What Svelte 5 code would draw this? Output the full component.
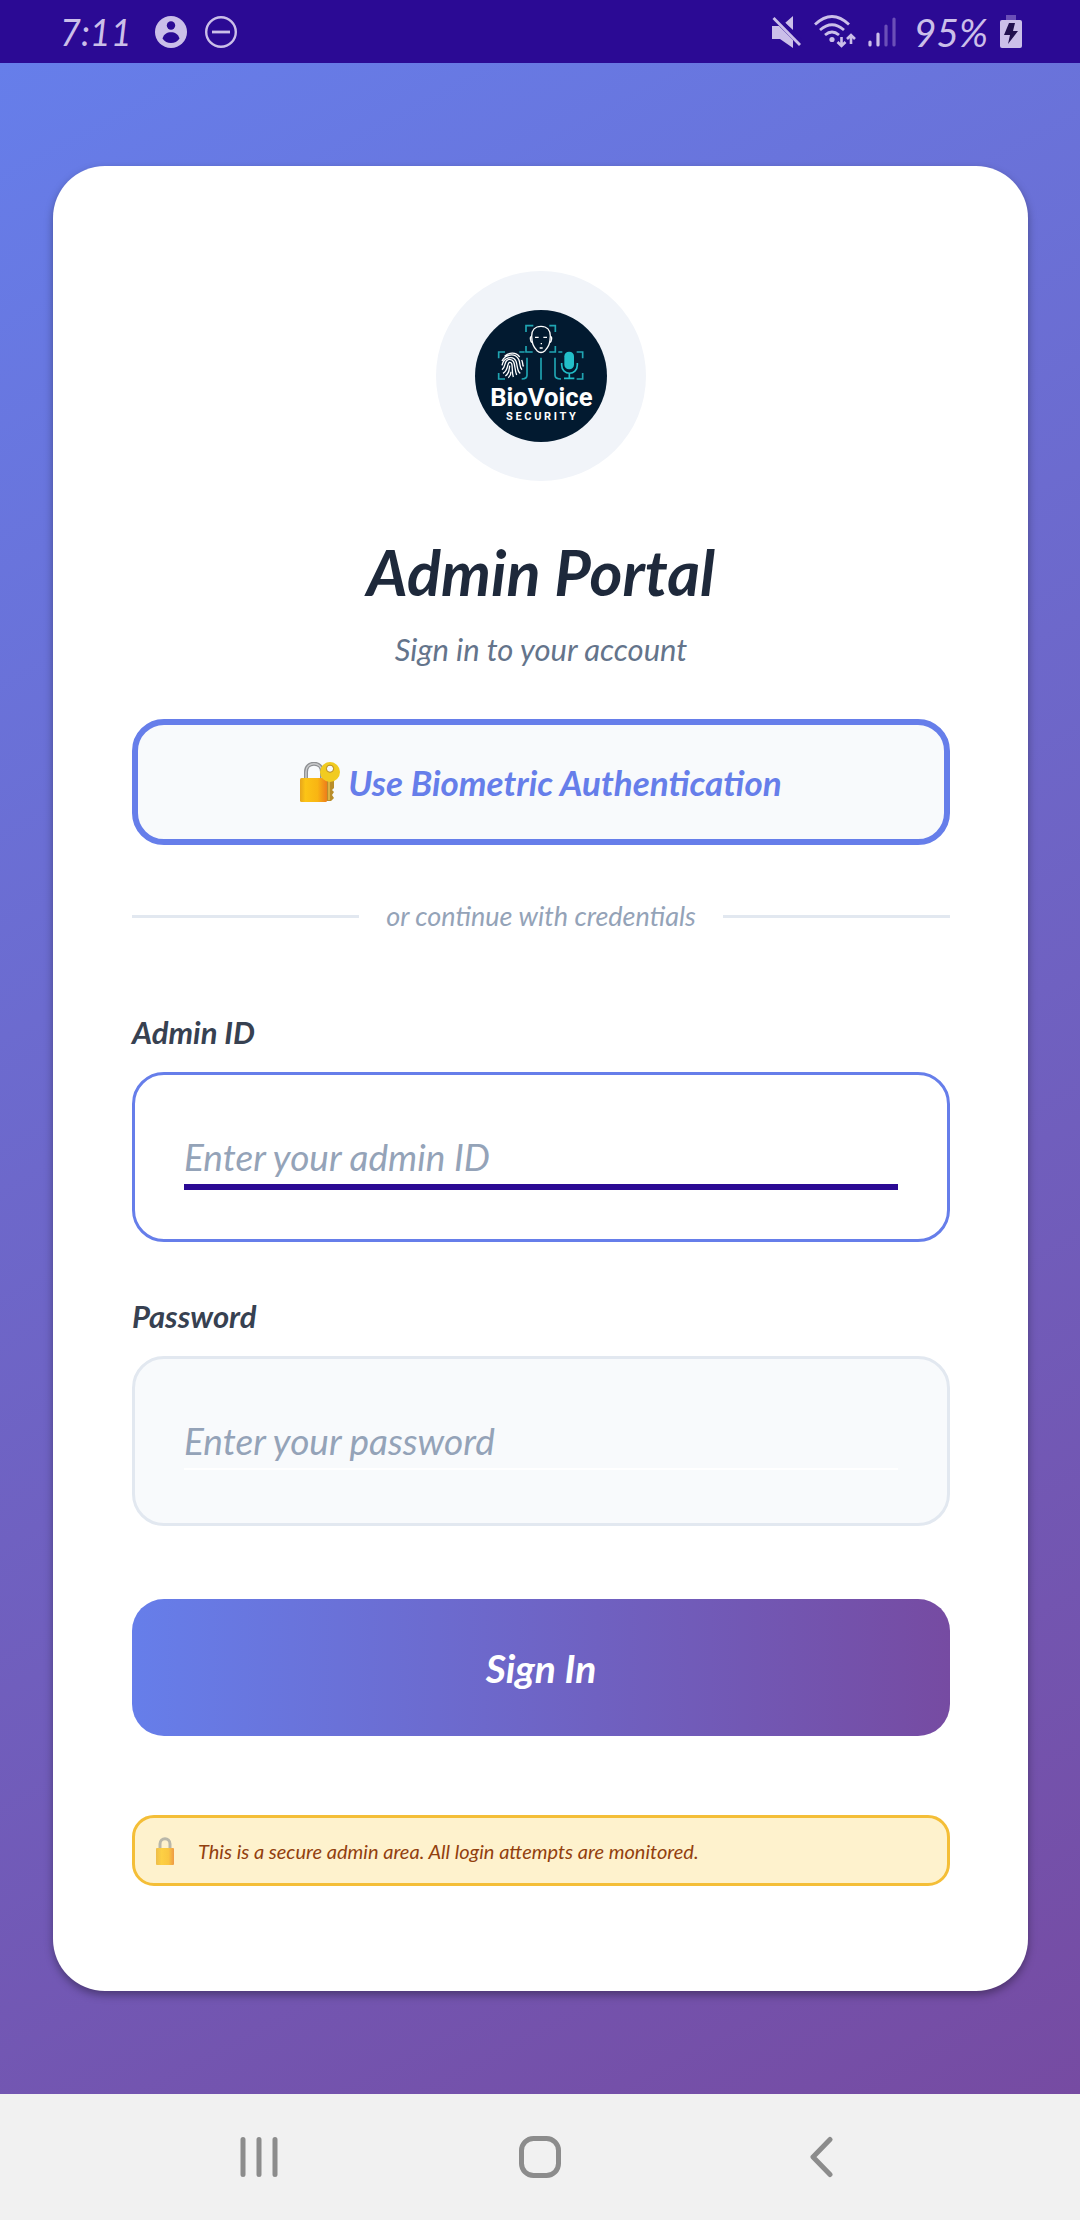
<script>
  let adminId = $state('');
  let password = $state('');
</script>

<div class="screen">
  <header class="status">
    <div class="status-left">
      <span class="clock">7:11</span>
      <svg class="round" viewBox="0 0 32 32" aria-hidden="true">
        <circle cx="16" cy="16" r="16" fill="#cbbfe9" />
        <circle cx="16" cy="9.500" r="4.200" fill="#2b0a94" />
        <path d="M7.500 22.500C9 18 12 16.300 16 16.300S23 18 24.500 22.500C22.500 25.500 19.500 27 16 27S9.500 25.500 7.500 22.500Z" fill="#2b0a94" />
      </svg>
      <svg class="round" viewBox="0 0 32 32" aria-hidden="true">
        <circle cx="16" cy="16" r="14.800" fill="none" stroke="#cbbfe9" stroke-width="2.400" />
        <path d="M7 16H25" stroke="#cbbfe9" stroke-width="2.800" />
      </svg>
    </div>
    <div class="status-right">
      <svg width="30" height="32" viewBox="0 0 30 32" aria-hidden="true">
        <path d="M0 10H7L21 24V32L8 23H0ZM21 0V14L13 7Z" fill="#cbbfe9" />
        <path d="M3.500 1L29 27" stroke="#2b0a94" stroke-width="6" />
        <path d="M1.500 2L28 29" stroke="#cbbfe9" stroke-width="2.800" />
      </svg>
      <svg width="42" height="34" viewBox="0 0 42 34" aria-hidden="true">
        <g fill="none" stroke="#cbbfe9" stroke-width="2.800">
          <path d="M1 9.500Q18-6.500 35 9.500M6 15Q18 4.500 30 15M11 20Q18 14 25 20" />
          <path d="M27.500 22V30M23.500 27L27.500 31L31.500 27M37 29V21M33 24L37 20L41 24" stroke-width="2.600" />
        </g>
        <circle cx="18" cy="24.500" r="2.600" fill="#cbbfe9" />
      </svg>
      <svg width="28" height="32" viewBox="0 0 28 32" aria-hidden="true">
        <g stroke-width="3.200" stroke-linecap="round">
          <path d="M2 26V29M10 18V29" stroke="#cbbfe9" />
          <path d="M18 10V29M26 3V29" stroke="#6b4fb8" />
        </g>
      </svg>
      <span class="percent">95%</span>
      <svg width="22" height="33" viewBox="0 0 22 33" aria-hidden="true">
        <path d="M6 0H16V6H6Z" fill="#6b4fb8" />
        <rect y="5" width="22" height="28" rx="2" fill="#cbbfe9" />
        <path d="M9 8H15L13 16H18L8 29L10 20H4Z" fill="#21104f" />
      </svg>
    </div>
  </header>

  <main>
    <section class="card">
      <div class="badge">
        <svg viewBox="135 147 396 396" role="img" aria-label="BioVoice Security">
          <circle cx="333" cy="345" r="198" fill="#021a30" />
          <g fill="none" stroke="#20a5b2" stroke-width="5">
            <path d="M288 213V194H310M358 194H376V213M288 255V273H308M358 273H376V255" />
            <path d="M206 292V273H225M206 336V354H225M268 273H284M291 290V343Q291 354 275 354" />
            <path d="M333 290V356M375 290V343Q375 354 393 354M385 273H397M440 273H458V292M458 336V354H440" />
            <path d="M395 306V312C395 345 442 345 442 312V306M418 337V351M402 352H433" stroke="#22bfc9" stroke-width="5" />
          </g>
          <rect x="403" y="272" width="29" height="53" rx="14" fill="#22bfc9" />
          <g fill="none" stroke="#fff" stroke-width="4">
            <path d="M333 196C315 196 305 208 305 225C306 248 309 256 321 269Q333 280 345 269C357 256 360 248 361 225C361 208 351 196 333 196Z" />
            <path d="M305 227C299 225 300 241 307 245M361 227C367 225 366 241 359 245M315 229H326M340 229H351M329 261H338M332 248H336" />
            <path d="M224 286C238 273 258 273 269 288M216 300C225 281 254 273 266 295C272 306 267 319 276 326" />
            <path d="M275 297C281 309 277 320 281 313M216 313C220 290 249 281 258 301C264 317 260 330 271 337" />
            <path d="M216 326C230 315 220 299 237 295C259 294 251 321 260 342M219 337C236 327 230 310 238 304C252 302 243 329 250 348" />
            <path d="M226 345C240 336 237 325 239 314M235 350C242 344 243 338 243 332" />
          </g>
          <text class="logo-name" x="334" y="434" text-anchor="middle">BioVoice</text>
          <text class="logo-tag" x="337" y="477" text-anchor="middle">SECURITY</text>
        </svg>
      </div>

      <h1>Admin Portal</h1>
      <p class="subtitle">Sign in to your account</p>

      <button type="button" class="biometric">
        <svg width="40" height="40" viewBox="0 0 40 40" aria-hidden="true">
          <defs>
            <linearGradient id="lock-body">
              <stop offset="0" stop-color="#e7a51c" />
              <stop offset="0.200" stop-color="#fcc416" />
              <stop offset="0.650" stop-color="#f9b513" />
              <stop offset="1" stop-color="#ee7d1b" />
            </linearGradient>
          </defs>
          <path d="M6 18V10C6 -1 22 -1 22 10V18" fill="none" stroke="#8e9093" stroke-width="4" />
          <path d="M6 18V10C6 -1 22 -1 22 10V18" fill="none" stroke="#c9cacc" stroke-width="1.500" />
          <rect y="16" width="27" height="24" rx="1.500" fill="url(#lock-body)" />
          <path d="M27 17H34V26L32 28L34 30L32 33L34 36L31 39H27Z" fill="#b98d2a" />
          <path d="M29 18V38" stroke="#dbb342" stroke-width="2" />
          <path fill-rule="evenodd" d="M30 0A10 10 0 1 1 30 20A10 10 0 1 1 30 0ZM30 3.500A3.200 3.200 0 1 0 30 9.900A3.200 3.200 0 1 0 30 3.500Z" fill="#f1cb20" />
          <circle cx="30" cy="6.700" r="3.600" fill="none" stroke="#b98d2a" />
        </svg>
        <span>Use Biometric Authentication</span>
      </button>

      <div class="divider"><span>or continue with credentials</span></div>

      <form onsubmit={(e) => e.preventDefault()}>
        <label for="admin-id">Admin ID</label>
        <div class="field active">
          <input id="admin-id" type="text" placeholder="Enter your admin ID" bind:value={adminId} />
        </div>
        <label for="password" class="second">Password</label>
        <div class="field">
          <input id="password" type="password" placeholder="Enter your password" bind:value={password} />
        </div>
        <button type="submit" class="submit">Sign In</button>
      </form>

      <div class="notice">
        <svg width="18" height="28" viewBox="0 0 18 28" aria-hidden="true">
          <defs>
            <linearGradient id="small-lock">
              <stop offset="0" stop-color="#edbd4b" />
              <stop offset="0.300" stop-color="#fdd044" />
              <stop offset="0.700" stop-color="#fac640" />
              <stop offset="1" stop-color="#ee9a46" />
            </linearGradient>
          </defs>
          <path d="M4 13V7C4 0 14 0 14 7V13" fill="none" stroke="#b9b7a9" stroke-width="3" />
          <rect y="11" width="18" height="17" rx="1" fill="url(#small-lock)" />
        </svg>
        <span>This is a secure admin area. All login attempts are monitored.</span>
      </div>
    </section>
  </main>

  <nav>
    <button type="button" aria-label="Recent apps">
      <svg width="38" height="42" viewBox="0 0 38 42"><path d="M3 3.500V38.500M19 3.500V38.500M35 3.500V38.500" stroke-width="5" /></svg>
    </button>
    <button type="button" aria-label="Home">
      <svg width="42" height="42" viewBox="0 0 42 42"><rect x="2.500" y="2.500" width="37" height="37" rx="12" stroke-width="5" /></svg>
    </button>
    <button type="button" aria-label="Back">
      <svg width="24" height="42" viewBox="0 0 24 42"><path d="M21 3.500L4 21L21 38.500" stroke-width="5" /></svg>
    </button>
  </nav>
</div>

<style>
  :global(body) {
    margin: 0;
  }

  .screen {
    display: flex;
    flex-direction: column;
    min-height: 100vh;
    font-family: Lato, "Liberation Sans", sans-serif;
    font-style: italic;
  }

  .screen *,
  .screen {
    box-sizing: border-box;
  }

  svg {
    display: block;
    flex: none;
  }

  button {
    font: inherit;
    cursor: pointer;
  }

  .status {
    display: flex;
    align-items: center;
    justify-content: space-between;
    height: 63px;
    padding: 0 58px 0 60px;
    background: #2b0a94;
    color: #cbbfe9;
  }

  .status-left,
  .status-right {
    display: flex;
    align-items: center;
  }

  .status-left {
    gap: 18px;
  }

  .status-right {
    gap: 12px;
  }

  .clock {
    min-width: 77px;
    font-size: 36px;
  }

  .percent {
    margin: 0 0 0 6px;
    font-size: 39px;
  }

  .round {
    width: 32px;
    height: 32px;
  }

  main {
    display: flex;
    flex: 1;
    flex-direction: column;
    justify-content: center;
    padding: 52px 52px 52px 53px;
    background: linear-gradient(152deg, #667eea, #764ba2);
  }

  .card {
    padding: 105px 78px 105px 79px;
    border-radius: 52px;
    background: #fff;
    box-shadow: 0 4px 9px rgba(0, 0, 0, 0.35);
  }

  .badge {
    display: grid;
    place-items: center;
    width: 210px;
    height: 210px;
    margin: 0 auto;
    border-radius: 50%;
    background: #f1f4f9;
  }

  .badge svg {
    width: 132px;
    height: 132px;
  }

  .logo-name {
    fill: #fff;
    font: 700 77px Roboto, sans-serif;
  }

  .logo-tag {
    fill: #fff;
    font: 700 33px Roboto, sans-serif;
    letter-spacing: 8px;
  }

  h1 {
    margin: 51px 0 0;
    color: #1e293b;
    font-size: 63px;
    font-weight: 700;
    line-height: 80px;
    text-align: center;
  }

  .subtitle {
    margin: 17px 0 50px;
    color: #64748b;
    font-size: 31px;
    line-height: 40px;
    text-align: center;
  }

  .biometric {
    display: flex;
    align-items: center;
    justify-content: center;
    gap: 8px;
    width: 100%;
    height: 126px;
    padding: 0;
    border: 6px solid #667eea;
    border-radius: 32px;
    background: #f8fafc;
    color: #667eea;
    font-size: 35px;
    font-weight: 700;
  }

  .divider {
    display: flex;
    align-items: center;
    gap: 27px;
    margin: 51px 0 76px;
    color: #94a3b8;
    font-size: 27px;
    line-height: 40px;
  }

  .divider::before,
  .divider::after {
    flex: 1;
    height: 3px;
    background: #e2e8f0;
    content: "";
  }

  label {
    display: block;
    margin-bottom: 20px;
    color: #374151;
    font-size: 31px;
    font-weight: 700;
    line-height: 40px;
  }

  .second {
    margin-top: 54px;
  }

  .field {
    height: 170px;
    padding: 36px 49px;
    border: 3px solid #e2e8f0;
    border-radius: 32px;
    background: #f8fafc;
  }

  .active {
    border-color: #667eea;
    background: #fff;
  }

  input {
    display: block;
    box-sizing: content-box !important;
    width: 100%;
    height: 55px;
    padding: 18px 0 0;
    border: 0;
    border-bottom: 2px solid #fff;
    border-radius: 0;
    outline: none;
    background: transparent;
    color: #1e293b;
    font: inherit;
    font-size: 37px;
  }

  input::placeholder {
    color: #94a3b8;
    opacity: 1;
  }

  .active input {
    border-bottom: 6px solid #2b0a94;
  }

  .submit {
    display: block;
    width: 100%;
    height: 137px;
    margin: 73px 0 79px;
    border: 0;
    border-radius: 32px;
    background: linear-gradient(90deg, #667eea, #764ba2);
    color: #fff;
    font-size: 39px;
    font-weight: 700;
  }

  .notice {
    display: flex;
    align-items: center;
    gap: 24px;
    min-height: 71px;
    padding: 0 21px;
    border: 3px solid #f4be37;
    border-radius: 22px;
    background: #fef2cd;
    color: #92400e;
    font-size: 20px;
  }

  nav {
    display: grid;
    grid-template-columns: repeat(3, 1fr);
    height: 126px;
    padding: 0 11%;
    background: #f1f1f1;
  }

  nav button {
    display: grid;
    place-items: center;
    border: 0;
    background: none;
  }

  nav svg {
    fill: none;
    stroke: #8c8c8c;
    stroke-linecap: round;
    stroke-linejoin: round;
  }
</style>
